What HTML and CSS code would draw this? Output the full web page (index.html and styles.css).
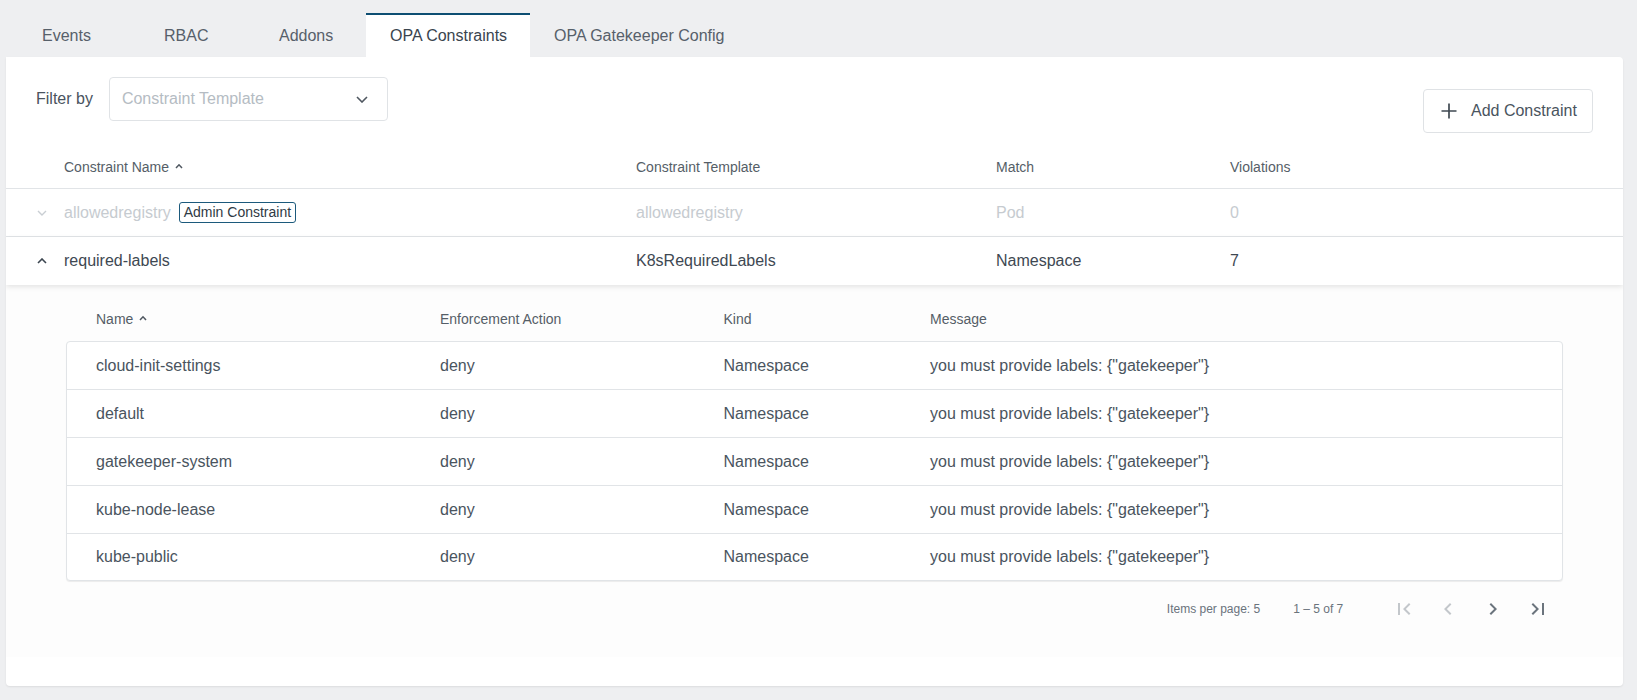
FILE: index.html
```html
<!DOCTYPE html>
<html>
<head>
<meta charset="utf-8">
<title>OPA Constraints</title>
<link rel="stylesheet" href="styles.css">
</head>
<body>
<nav class="tabs">
  <div class="tab tab-events">Events</div>
  <div class="tab tab-rbac">RBAC</div>
  <div class="tab tab-addons">Addons</div>
  <div class="tab tab-active">OPA Constraints</div>
  <div class="tab">OPA Gatekeeper Config</div>
</nav>
<main class="card">
  <div class="toolbar">
    <div class="filter">
      <span class="filter-label">Filter by</span>
      <div class="select">
        <span class="placeholder">Constraint Template</span>
        <svg class="select-arrow" width="12" height="7" viewBox="0 0 12 7"><polyline points="1,1 6,6 11,1" fill="none" stroke="#4f5760" stroke-width="1.6"/></svg>
      </div>
    </div>
    <button class="add-btn">
      <svg class="plus" width="16" height="16" viewBox="0 0 16 16"><path d="M8 0.5V15.5M0.5 8H15.5" stroke="#3f4851" stroke-width="1.7" fill="none"/></svg>
      <span>Add Constraint</span>
    </button>
  </div>

  <div class="row main-cols head">
    <div></div>
    <div class="sortable">Constraint Name <svg width="8" height="6" viewBox="0 0 8 6"><polyline points="1,5 4,1.8 7,5" fill="none" stroke="#4f5760" stroke-width="1.5"/></svg></div>
    <div>Constraint Template</div>
    <div>Match</div>
    <div>Violations</div>
  </div>

  <div class="row main-cols body-row disabled">
    <div class="toggle"><svg width="10" height="6" viewBox="0 0 10 6"><polyline points="1,1 5,5 9,1" fill="none" stroke="#c9ced3" stroke-width="1.4"/></svg></div>
    <div class="name-cell">allowedregistry <span class="badge">Admin Constraint</span></div>
    <div>allowedregistry</div>
    <div>Pod</div>
    <div>0</div>
  </div>

  <div class="row main-cols body-row expanded">
    <div class="toggle"><svg width="10" height="6" viewBox="0 0 10 6"><polyline points="1,5 5,1 9,5" fill="none" stroke="#3c4650" stroke-width="1.6"/></svg></div>
    <div>required-labels</div>
    <div>K8sRequiredLabels</div>
    <div>Namespace</div>
    <div>7</div>
  </div>

  <section class="detail">
    <div class="detail-inner">
      <div class="sub-cols sub-head">
        <div class="sortable">Name <svg width="8" height="6" viewBox="0 0 8 6"><polyline points="1,5 4,1.8 7,5" fill="none" stroke="#4f5760" stroke-width="1.5"/></svg></div>
        <div>Enforcement Action</div>
        <div>Kind</div>
        <div>Message</div>
      </div>
      <div class="sub-table">
        <div class="sub-cols sub-row"><div>cloud-init-settings</div><div>deny</div><div>Namespace</div><div>you must provide labels: {"gatekeeper"}</div></div>
        <div class="sub-cols sub-row"><div>default</div><div>deny</div><div>Namespace</div><div>you must provide labels: {"gatekeeper"}</div></div>
        <div class="sub-cols sub-row"><div>gatekeeper-system</div><div>deny</div><div>Namespace</div><div>you must provide labels: {"gatekeeper"}</div></div>
        <div class="sub-cols sub-row"><div>kube-node-lease</div><div>deny</div><div>Namespace</div><div>you must provide labels: {"gatekeeper"}</div></div>
        <div class="sub-cols sub-row"><div>kube-public</div><div>deny</div><div>Namespace</div><div>you must provide labels: {"gatekeeper"}</div></div>
      </div>
      <div class="paginator">
        <span class="per-page">Items per page: 5</span>
        <span class="range">1 – 5 of 7</span>
        <span class="pg-btn off"><svg width="24" height="24" viewBox="0 0 24 24"><path d="M18.41 16.59L13.82 12l4.59-4.59L17 6l-6 6 6 6zM6 6h2v12H6z"/></svg></span>
        <span class="pg-btn off"><svg width="24" height="24" viewBox="0 0 24 24"><path d="M15.41 7.41L14 6l-6 6 6 6 1.41-1.41L10.83 12z"/></svg></span>
        <span class="pg-btn"><svg width="24" height="24" viewBox="0 0 24 24"><path d="M10 6L8.59 7.41 13.17 12l-4.58 4.59L10 18l6-6z"/></svg></span>
        <span class="pg-btn"><svg width="24" height="24" viewBox="0 0 24 24"><path d="M5.59 7.41L10.18 12l-4.59 4.59L7 18l6-6-6-6zM16 6h2v12h-2z"/></svg></span>
      </div>
    </div>
  </section>
</main>
</body>
</html>
```

FILE: styles.css
```css
* { box-sizing: border-box; }

html, body {
  margin: 0;
  padding: 0;
  background: #eeeff1;
  font-family: "Liberation Sans", Arial, sans-serif;
  color: #404a54;
  height: 700px;
  overflow: hidden;
}

.tabs {
  display: flex;
  margin-top: 13px;
  padding-left: 18px;
  height: 44px;
}

.tab {
  height: 44px;
  padding: 0 24px;
  border-top: 2px solid transparent;
  display: flex;
  align-items: center;
  font-size: 16px;
  color: #57606a;
  white-space: nowrap;
}

.tab-events { width: 122px; }
.tab-rbac { width: 115px; }
.tab-addons { width: 111px; }

.tab-active {
  width: 164px;
  background: #fff;
  border-top-color: #0d4e72;
  color: #3a444e;
}

.card {
  background: #fff;
  margin: 0 14px 0 6px;
  height: 629px;
  border-radius: 0 4px 4px 4px;
  box-shadow: 0 1px 2px rgba(0, 0, 0, 0.08);
  overflow: hidden;
}

.toolbar {
  height: 88px;
  padding: 20px 30px 0 30px;
  display: flex;
  justify-content: space-between;
  align-items: flex-start;
}

.filter {
  display: flex;
  align-items: center;
}

.filter-label {
  font-size: 16px;
  color: #4a545e;
  margin-right: 16px;
}

.select {
  width: 279px;
  height: 44px;
  border: 1px solid #e0e3e6;
  border-radius: 4px;
  display: flex;
  align-items: center;
  justify-content: space-between;
  padding: 0 19px 0 12px;
}

.placeholder {
  font-size: 16px;
  color: #b5bcc3;
}

.add-btn {
  margin-top: 12px;
  width: 170px;
  height: 44px;
  border: 1px solid #dfe2e5;
  border-radius: 4px;
  background: #fff;
  display: flex;
  align-items: center;
  padding: 0 0 0 17px;
  font-family: inherit;
  font-size: 16px;
  color: #4a545e;
  gap: 14px;
}

.row {
  display: grid;
  align-items: center;
  border-bottom: 1px solid #e1e4e7;
}

.main-cols {
  grid-template-columns: 58px 572px 360px 234px 1fr;
}

.head {
  height: 44px;
  font-size: 14px;
  color: #555e67;
  padding-top: 1px;
}

.sortable {
  display: flex;
  align-items: center;
  gap: 6px;
}

.sortable svg { margin-top: -2px; }

.body-row {
  height: 48px;
  font-size: 16px;
  color: #3e4852;
}

.toggle {
  padding-left: 31px;
  display: flex;
  align-items: center;
}

.disabled { color: #c6cbd0; }

.name-cell {
  display: flex;
  align-items: center;
  gap: 8px;
}

.badge {
  font-size: 14px;
  color: #2f3a44;
  border: 1px solid #1c5a7c;
  border-radius: 3px;
  padding: 0 4px;
  height: 21px;
  line-height: 19px;
}

.expanded {
  position: relative;
  z-index: 1;
  border-bottom: none;
  box-shadow: 0 2px 5px rgba(0, 0, 0, 0.1);
}

.detail {
  background: #fdfdfd;
  height: 372px;
  padding: 12px 60px 0 60px;
}

.sub-cols {
  display: grid;
  grid-template-columns: 344px 283.5px 206.5px 1fr;
  align-items: center;
  padding-left: 30px;
}

.sub-head {
  height: 44px;
  font-size: 14px;
  color: #555e67;
}

.sub-table {
  background: #fff;
  border: 1px solid #e1e4e7;
  border-radius: 4px;
  box-shadow: 0 1px 1px rgba(0, 0, 0, 0.07);
}

.sub-row {
  height: 48px;
  font-size: 16px;
  color: #4a545e;
  border-bottom: 1px solid #e1e4e7;
  padding-left: 29px;
}

.sub-row:last-child {
  border-bottom: none;
  height: 46px;
}

.paginator {
  height: 55px;
  display: flex;
  align-items: center;
  justify-content: flex-end;
  padding-right: 3px;
  font-size: 12px;
  color: #6a737c;
}

.per-page { margin-right: 33px; }
.range { margin-right: 38px; }

.pg-btn {
  width: 44.7px;
  height: 40px;
  display: flex;
  align-items: center;
  justify-content: center;
  fill: #6b747d;
}

.pg-btn.off { fill: #c3c7cb; }
```
